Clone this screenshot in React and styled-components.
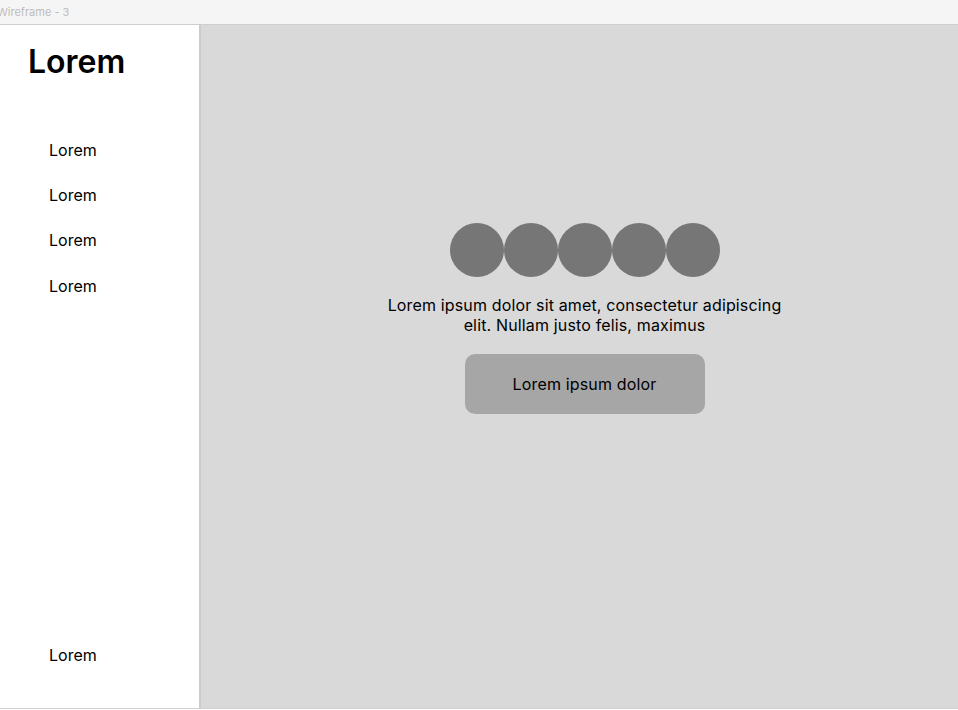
import styled, { createGlobalStyle } from "styled-components";

const GlobalStyle = createGlobalStyle`
  html, body {
    margin: 0;
    padding: 0;
    background: #ffffff;
  }
  body {
    font-family: Inter, "Noto Sans", sans-serif;
    color: #000;
  }
`;

const navItems = ["Lorem", "Lorem", "Lorem", "Lorem"];
const dots = [1, 2, 3, 4, 5];

const App = () => {
  return (
    <>
      <GlobalStyle />
      <Frame>
        <TopBar>
          <FrameLabel>Wireframe - 3</FrameLabel>
        </TopBar>
        <Body>
          <Sidebar>
            <Brand>Lorem</Brand>
            <Nav>
              {navItems.map((item, i) => (
                <NavItem key={i}>{item}</NavItem>
              ))}
            </Nav>
            <NavFooter>Lorem</NavFooter>
          </Sidebar>
          <Main>
            <Dots>
              {dots.map((d) => (
                <Dot key={d} />
              ))}
            </Dots>
            <Message>
              Lorem ipsum dolor sit amet, consectetur adipiscing elit. Nullam
              justo felis, maximus
            </Message>
            <Action>Lorem ipsum dolor</Action>
          </Main>
        </Body>
      </Frame>
    </>
  );
};

export default App;

const Frame = styled.div`
  width: 958px;
  height: 710px;
  display: flex;
  flex-direction: column;
  overflow: hidden;
`;

const TopBar = styled.div`
  height: 24px;
  flex-shrink: 0;
  background: #f5f5f5;
  border-bottom: 1px solid #cfcfcf;
  display: flex;
  align-items: center;
`;

const FrameLabel = styled.span`
  margin-left: -3px;
  font-size: 11px;
  color: #bdbdbd;
`;

const Body = styled.div`
  height: 683px;
  display: flex;
  border-bottom: 1px solid #cfcfcf;
`;

const Sidebar = styled.aside`
  width: 201px;
  flex-shrink: 0;
  background: #ffffff;
  border-right: 2px solid #cccccc;
  display: flex;
  flex-direction: column;
  padding: 18px 0 43px;
  box-sizing: border-box;
`;

const Brand = styled.h1`
  margin: 0 0 0 28px;
  font-size: 32px;
  font-weight: 600;
  line-height: 38px;
`;

const Nav = styled.nav`
  display: flex;
  flex-direction: column;
  gap: 25.7px;
  margin-top: 60px;
  padding-left: 49px;
`;

const NavItem = styled.div`
  font-size: 16px;
  line-height: 19.5px;
`;

const NavFooter = styled(NavItem)`
  margin-top: auto;
  padding-left: 49px;
`;

const Main = styled.main`
  flex: 1;
  background: #d9d9d9;
  display: flex;
  flex-direction: column;
  align-items: center;
  padding: 198px 0 0 10px;
`;

const Dots = styled.div`
  display: flex;
`;

const Dot = styled.div`
  width: 54px;
  height: 54px;
  border-radius: 50%;
  background: #767676;
`;

const Message = styled.p`
  margin: 18px 0 0;
  width: 400px;
  text-align: center;
  font-size: 16px;
  letter-spacing: 0.15px;
  line-height: 20px;
`;

const Action = styled.button`
  margin-top: 19px;
  width: 240px;
  height: 60px;
  border: none;
  border-radius: 10px;
  background: #a6a6a6;
  font-family: Inter, "Noto Sans", sans-serif;
  font-size: 16px;
  letter-spacing: 0.15px;
  color: #000;
`;
